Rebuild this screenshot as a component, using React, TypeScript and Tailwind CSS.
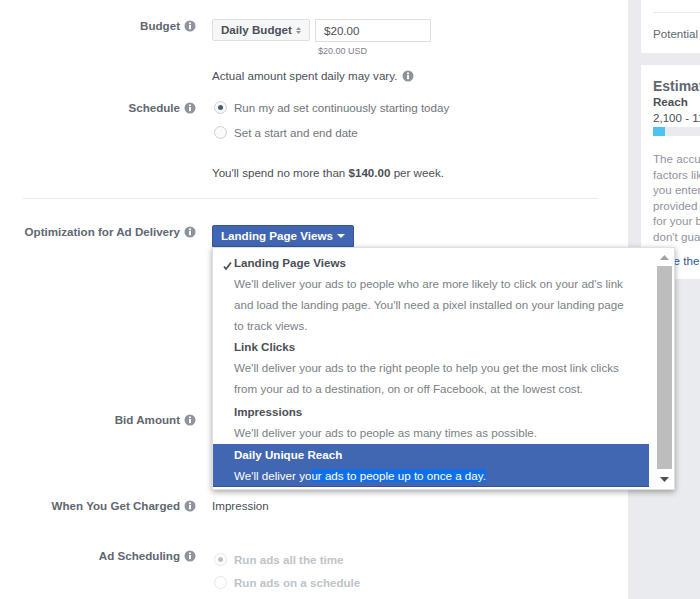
import React from 'react';

const font = 'font-["Liberation_Sans",Arial,sans-serif]';

function InfoIcon() {
  return (
    <svg className="w-3 h-3 shrink-0" viewBox="0 0 12 12">
      <circle cx="6" cy="6" r="5.5" fill="#8d949e" />
      <rect x="5" y="5" width="2" height="4.2" fill="#fff" />
      <rect x="5" y="2.5" width="2" height="1.7" fill="#fff" />
    </svg>
  );
}

function Radio({ checked, disabled, label }: { checked?: boolean; disabled?: boolean; label: string }) {
  return (
    <div className="flex items-center gap-[7px] h-[13px]">
      <span
        className={`w-[13px] h-[13px] rounded-full border flex items-center justify-center ml-[2px] ${
          disabled ? 'border-[#e4e6e9]' : 'border-[#ccd0d5] bg-[#fafafa]'
        }`}
      >
        {checked && <span className={`w-[5px] h-[5px] rounded-full ${disabled ? 'bg-[#bcc0c6]' : 'bg-[#4b5a78]'}`} />}
      </span>
      <span className={disabled ? 'text-[#bec3c9] font-bold' : 'text-[#6f747b]'}>{label}</span>
    </div>
  );
}

function Row({ label, className, children }: { label: string; className?: string; children?: React.ReactNode }) {
  return (
    <div className={`flex ${className ?? ''}`}>
      <div className="w-[196px] shrink-0 flex justify-end items-center gap-[4px] h-[14px] text-[#616770] font-bold">
        <span className="whitespace-nowrap">{label}</span>
        <InfoIcon />
      </div>
      <div className="ml-[16px] flex-1 min-w-0">{children}</div>
    </div>
  );
}

function OptionItem({ title, lines, checked, className }: { title: string; lines: string[]; checked?: boolean; className?: string }) {
  return (
    <div className={`relative pl-[21px] ${className ?? ''}`}>
      {checked && (
        <svg className="absolute left-[10px] top-[10px] w-[9px] h-[8px]" viewBox="0 0 9 8">
          <path d="M1 4.5 L3 7 L8 0.5" fill="none" stroke="#4b4f56" strokeWidth="1.7" />
        </svg>
      )}
      <div className="font-bold text-[#4b4f56] h-[21px] leading-[21px]">{title}</div>
      {lines.map((line) => (
        <div key={line} className="h-[21px] leading-[21px] text-[#7a7f86] whitespace-nowrap">
          {line}
        </div>
      ))}
    </div>
  );
}

function DeliveryMenu() {
  return (
    <div className="absolute left-[212px] top-[247px] w-[463px] h-[243px] bg-white flex border border-[#dddfe2] shadow-[0_2px_6px_rgba(0,0,0,0.35)] z-10">
      <div className="w-[436px] shrink-0 pt-[4px]">
        <OptionItem
          checked
          title="Landing Page Views"
          lines={[
            "We'll deliver your ads to people who are more likely to click on your ad's link",
            "and load the landing page. You'll need a pixel installed on your landing page",
            'to track views.',
          ]}
        />
        <OptionItem
          className="mb-[2px]"
          title="Link Clicks"
          lines={[
            "We'll deliver your ads to the right people to help you get the most link clicks",
            'from your ad to a destination, on or off Facebook, at the lowest cost.',
          ]}
        />
        <OptionItem title="Impressions" lines={["We'll deliver your ads to people as many times as possible."]} />
        <div className="bg-[#4267b2] h-[43px] pl-[21px] text-white border-b border-[#35528e] mt-[1px]">
          <div className="font-bold h-[21px] leading-[21px]">Daily Unique Reach</div>
          <div className="h-[21px] leading-[21px] whitespace-nowrap">
            We'll deliver yo<span className="bg-[#0f6fe8]">ur ads to people up to once a day.</span>
          </div>
        </div>
      </div>
      {/* scrollbar */}
      <div className="ml-[8px] w-[15px] flex flex-col items-center">
        <div className="h-[18px] flex items-center justify-center">
          <svg className="w-[9px] h-[5px]" viewBox="0 0 9 5"><path d="M4.5 0 L9 5 H0 Z" fill="#a3a3a3" /></svg>
        </div>
        <div className="w-[15px] h-[203px] bg-[#bdbdbd]" />
        <div className="h-[20px] flex items-center justify-center">
          <svg className="w-[9px] h-[5px]" viewBox="0 0 9 5"><path d="M0 0 H9 L4.5 5 Z" fill="#505050" /></svg>
        </div>
      </div>
    </div>
  );
}

function SidePanels() {
  return (
    <div className="ml-[13px] flex-1 min-w-0 flex flex-col gap-[12px] overflow-hidden text-[#4b4f56]">
      <div className="bg-white h-[53px] pl-[12px]">
        <div className="h-[13px] border-b border-[#e9ebee]" />
        <div className="mt-[14px] h-[14px] leading-[14px] whitespace-nowrap text-[#606770]">Potential Reach</div>
      </div>
      <div className="bg-white h-[214px] pl-[12px] pt-[13px]">
        <div className="text-[14px] font-bold text-[#606770] h-[16px] leading-[16px] whitespace-nowrap">Estimated Daily Results</div>
        <div className="font-bold h-[16px] leading-[16px] whitespace-nowrap">Reach</div>
        <div className="h-[16px] leading-[16px] whitespace-nowrap">2,100 - 11,000</div>
        <div className="h-[9px] w-[100px] bg-[#e9ebee] mt-[1px]">
          <div className="h-full w-[12px] bg-[#4fc3ec]" />
        </div>
        <div className="mt-[15px] text-[#90949c] leading-[15.6px] whitespace-nowrap">
          <div>The accuracy of estimates is based on</div>
          <div>factors like past campaign data, the</div>
          <div>you entered, market data, targeting</div>
          <div>provided by you and more</div>
          <div>for your budget, but these estimates</div>
          <div>don't guarantee results</div>
        </div>
        <div className="mt-[8px] text-[#365899] leading-[15px] whitespace-nowrap">Have the</div>
      </div>
    </div>
  );
}

export default function App() {
  return (
    <div className={`relative w-[700px] h-[599px] overflow-hidden bg-[#e9ebee] flex text-[11.6px] text-[#4b4f56] ${font}`}>
      <div className="w-[628px] h-full shrink-0 bg-white pt-[19px] overflow-hidden">
        <Row label="Budget">
          <div className="flex gap-[5px]">
            <div className="w-[98px] h-[22px] bg-[#f6f7f9] border border-[#dddfe2] rounded-[2px] flex items-center pl-[8px] font-bold text-[#4b4f56]">
              Daily Budget
              <svg className="w-[5px] h-[7px] ml-[4px]" viewBox="0 0 5 7">
                <path d="M2.5 0 L5 3 H0 Z M0 4 H5 L2.5 7 Z" fill="#8d949e" />
              </svg>
            </div>
            <div className="w-[116px] h-[23px] border border-[#dddfe2] flex items-center pl-[8px]">$20.00</div>
          </div>
          <div className="ml-[106px] mt-[3px] text-[9px] leading-[12px] text-[#7d8188]">$20.00 USD</div>
          <div className="mt-[12px] flex items-center gap-[5px] h-[14px]">
            Actual amount spent daily may vary.
            <InfoIcon />
          </div>
        </Row>

        <Row label="Schedule" className="mt-[18px]">
          <div className="flex flex-col gap-[12px]">
            <Radio checked label="Run my ad set continuously starting today" />
            <Radio label="Set a start and end date" />
          </div>
          <div className="mt-[27px] h-[14px] leading-[14px]">
            You'll spend no more than <span className="font-bold">$140.00</span> per week.
          </div>
        </Row>

        <div className="ml-[23px] w-[575px] border-t border-[#e9ebee] mt-[18px]" />

        <Row label="Optimization for Ad Delivery" className="mt-[26px]">
          <div className="w-[142px] h-[22px] bg-[#4267b2] border border-[#365899] rounded-t-[2px] text-white font-bold flex items-center pl-[8px]">
            Landing Page Views
            <svg className="w-[8px] h-[4px] ml-[4px]" viewBox="0 0 8 4"><path d="M0 0 H8 L4 4 Z" fill="#fff" /></svg>
          </div>
        </Row>

        <Row label="Bid Amount" className="mt-[166px]" />
        <Row label="When You Get Charged" className="mt-[72px]">
          <div className="h-[14px] leading-[14px]">Impression</div>
        </Row>
        <Row label="Ad Scheduling" className="mt-[36px]">
          <div className="flex flex-col gap-[10px] mt-[4px]">
            <Radio checked disabled label="Run ads all the time" />
            <Radio disabled label="Run ads on a schedule" />
          </div>
        </Row>
      </div>
      <SidePanels />
      <DeliveryMenu />
    </div>
  );
}
